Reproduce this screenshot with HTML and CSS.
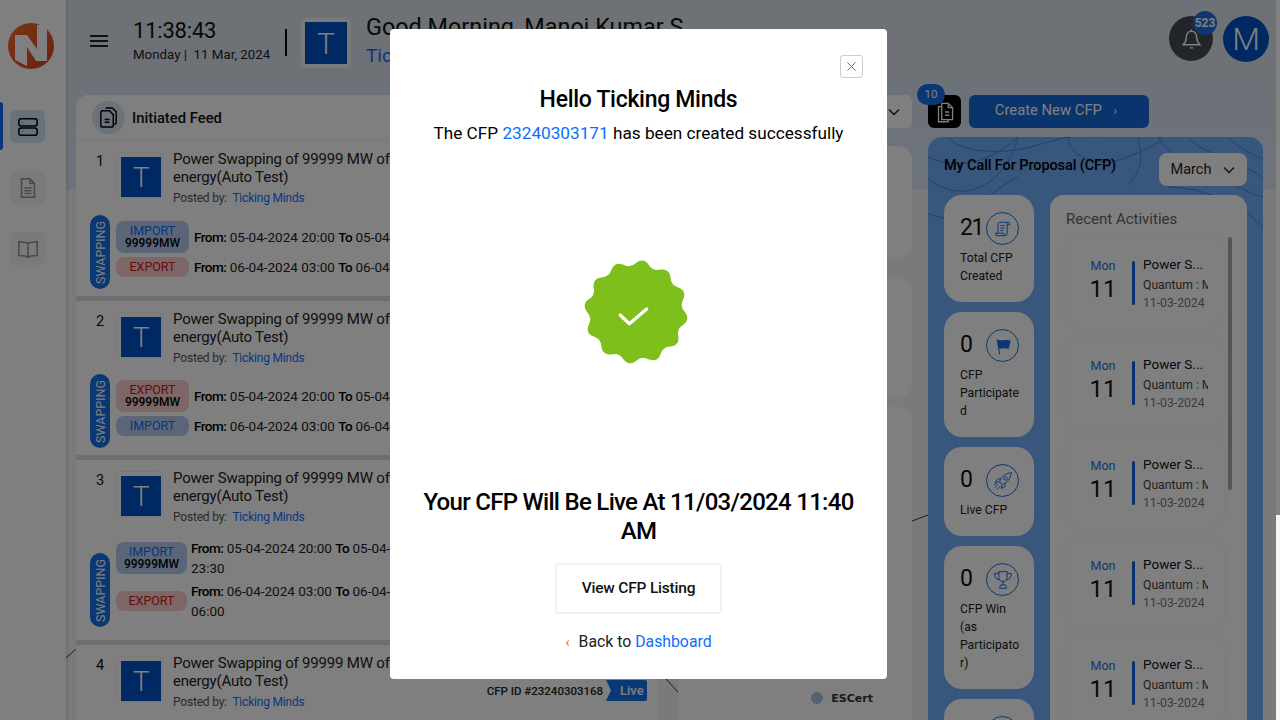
FILE: index.html
```html
<!DOCTYPE html>
<html lang="en">
<head>
  <meta charset="UTF-8">
  <meta name="viewport" content="width=device-width, initial-scale=1.0">
  <title>CFP Dashboard</title>
  <link rel="stylesheet" href="styles.css">
</head>
<body>
  <div class="app">
    <!-- Sidebar -->
    <aside class="sidebar">
      <svg class="logo" viewBox="0 0 46 46">
        <defs>
          <linearGradient id="logo-fill" x1="0" y1="0" x2="1" y2="1">
            <stop offset="0" stop-color="#f4702a"/>
            <stop offset="1" stop-color="#d8401c"/>
          </linearGradient>
        </defs>
        <circle cx="23" cy="23" r="23" fill="url(#logo-fill)"/>
        <path d="M7 37V12h12l10 14V2h10v36H28L19 24v19z" fill="#fff"/>
      </svg>
      <nav class="side-nav">
        <span class="side-marker"></span>
        <a class="side-item active">
          <svg viewBox="0 0 24 24" class="side-icon dark"><rect x="2" y="3" width="20" height="8" rx="2.5"/><rect x="2" y="13" width="20" height="8" rx="2.5"/><path d="M6 7h.5M6 17h.5"/></svg>
        </a>
        <a class="side-item">
          <svg viewBox="0 0 24 24" class="side-icon"><path d="M5 2h9l5 5v15H5z"/><path d="M14 2v5h5M8 12h8M8 15h8M8 18h8"/></svg>
        </a>
        <a class="side-item">
          <svg viewBox="0 0 24 24" class="side-icon"><path d="M12 6C9 4 6 4 2 4v15c4 0 7 0 10 2 3-2 6-2 10-2V4c-4 0-7 0-10 2zM12 6v15"/></svg>
        </a>
      </nav>
    </aside>

    <main class="main">
      <svg class="bg-lines" viewBox="0 0 1210 720">
        <path d="M0 658L10 649M600 679L612 692M846 521L862 515"/>
      </svg>

      <!-- Header -->
      <header class="topbar">
        <button class="menu-btn"><span></span><span></span><span></span></button>
        <div class="clock">
          <div class="clock-time">11:38:43</div>
          <div class="clock-date">Monday | &nbsp;11 Mar, 2024</div>
        </div>
        <div class="top-divider"></div>
        <div class="org-logo"><span>T</span></div>
        <div class="greeting">
          <div class="greeting-title">Good Morning, Manoj Kumar S</div>
          <div class="greeting-org">Ticking Minds</div>
        </div>
        <div class="top-right">
          <div class="bell">
            <svg viewBox="0 0 24 24"><path d="M4 18c2-2 3-3.500 3-7 0-3.500 2-6 5-6s5 2.500 5 6c0 3.500 1 5 3 7z"/><path d="M10.500 21h3M12 3v2"/></svg>
            <span class="bell-count">523</span>
          </div>
          <div class="avatar">M</div>
        </div>
      </header>

      <div class="columns">
        <!-- Feed -->
        <section class="feed">
          <div class="feed-head">
            <span class="feed-icon">
              <svg viewBox="0 0 24 24"><path d="M9 2h7l4 4v11a2 2 0 0 1-2 2"/><path d="M4 7a2 2 0 0 1 2-2h7l4 4v11a2 2 0 0 1-2 2H6a2 2 0 0 1-2-2z"/><path d="M8 14h5M8 17h5"/></svg>
            </span>
            <h2>Initiated Feed</h2>
          </div>

          <article class="feed-row row-a">
            <div class="row-head">
              <span class="row-num">1</span>
              <div class="row-logo"><span>T</span></div>
              <div>
                <div class="row-title">Power Swapping of 99999 MW of<br>energy(Auto Test)</div>
                <div class="row-posted">Posted by: &nbsp;<a>Ticking Minds</a></div>
              </div>
            </div>
            <div class="swap">
              <div class="swap-pill"><span>SWAPPING</span></div>
              <div class="swap-lines">
                <div class="swap-line">
                  <div class="chip import">IMPORT<b>99999MW</b></div>
                  <div class="time"><b>From:</b> 05-04-2024 20:00 <b>To</b> 05-04-2024 23:30</div>
                </div>
                <div class="swap-line">
                  <div class="chip export">EXPORT</div>
                  <div class="time"><b>From:</b> 06-04-2024 03:00 <b>To</b> 06-04-2024 06:00</div>
                </div>
              </div>
            </div>
          </article>

          <article class="feed-row row-b">
            <div class="row-head">
              <span class="row-num">2</span>
              <div class="row-logo"><span>T</span></div>
              <div>
                <div class="row-title">Power Swapping of 99999 MW of<br>energy(Auto Test)</div>
                <div class="row-posted">Posted by: &nbsp;<a>Ticking Minds</a></div>
              </div>
            </div>
            <div class="swap">
              <div class="swap-pill"><span>SWAPPING</span></div>
              <div class="swap-lines">
                <div class="swap-line">
                  <div class="chip export">EXPORT<b>99999MW</b></div>
                  <div class="time"><b>From:</b> 05-04-2024 20:00 <b>To</b> 05-04-2024 23:30</div>
                </div>
                <div class="swap-line">
                  <div class="chip import">IMPORT</div>
                  <div class="time"><b>From:</b> 06-04-2024 03:00 <b>To</b> 06-04-2024 06:00</div>
                </div>
              </div>
            </div>
          </article>

          <article class="feed-row row-c">
            <div class="row-head">
              <span class="row-num">3</span>
              <div class="row-logo"><span>T</span></div>
              <div>
                <div class="row-title">Power Swapping of 99999 MW of<br>energy(Auto Test)</div>
                <div class="row-posted">Posted by: &nbsp;<a>Ticking Minds</a></div>
              </div>
            </div>
            <div class="swap swap-wrap">
              <div class="swap-pill"><span>SWAPPING</span></div>
              <div class="swap-lines">
                <div class="swap-line">
                  <div class="chip import">IMPORT<b>99999MW</b></div>
                  <div class="time"><b>From:</b> 05-04-2024 20:00 <b>To</b> 05-04-2024<br>23:30</div>
                </div>
                <div class="swap-line">
                  <div class="chip export">EXPORT</div>
                  <div class="time"><b>From:</b> 06-04-2024 03:00 <b>To</b> 06-04-2024<br>06:00</div>
                </div>
              </div>
            </div>
          </article>

          <article class="feed-row row-d">
            <div class="row-head">
              <span class="row-num">4</span>
              <div class="row-logo"><span>T</span></div>
              <div>
                <div class="row-title">Power Swapping of 99999 MW of<br>energy(Auto Test)</div>
                <div class="row-posted">Posted by: &nbsp;<a>Ticking Minds</a></div>
              </div>
            </div>
            <div class="cfp-id">CFP ID #23240303168 <span class="live">Live</span></div>
          </article>
        </section>

        <!-- Middle column -->
        <section class="middle">
          <div class="mid-select">March
            <svg class="chev" viewBox="0 0 12 8"><path d="M1 1.500l5 5 5-5"/></svg>
          </div>
          <div class="mid-card mid-one"></div>
          <div class="mid-card mid-two"></div>
          <div class="mid-card mid-three">
            <span class="legend-dot"></span><span class="legend-text">ESCert</span>
          </div>
        </section>

        <!-- My CFP -->
        <section class="cfp">
          <div class="cfp-actions">
            <div class="doc-btn">
              <svg viewBox="0 0 24 24"><path d="M9 4h6l4 4v11H9z"/><path d="M15 4v4h4M12 12h4M12 15h4M9 7H6v14h9v-2"/></svg>
              <span class="doc-count">10</span>
            </div>
            <a class="create-btn">Create New CFP <span>›</span></a>
          </div>

          <div class="panel">
            <svg class="panel-lines" viewBox="0 0 335 600" preserveAspectRatio="none">
              <path d="M20 0c10 14 50 20 90 8s40-8 60-8M140 0c0 20 30 32 60 20s40-20 30-20M0 20c30 14 60 6 90-20M0 42c40 30 80 0 90-42M200 48c20-20 10-40 10-48M230 0c10 20 40 30 60 40s40 20 45 20M260 0c10 14 40 20 75 40M300 0c6 8 20 16 35 22M-10 70c40 30 60-10 100-30M240 50c30 0 70 14 95 40"/>
            </svg>
            <div class="panel-head">
              <h3>My Call For Proposal (CFP)</h3>
              <div class="panel-select">March
                <svg class="chev" viewBox="0 0 12 8"><path d="M1 1.500l5 5 5-5"/></svg>
              </div>
            </div>
            <div class="panel-body">
              <div class="stats">
                <div class="stat">
                  <div class="stat-top"><span class="stat-num">21</span>
                    <span class="stat-icon"><svg viewBox="0 0 24 24"><path d="M8 4h10a2 2 0 0 1 2 2v1h-3M8 4a2 2 0 0 0-2 2v11M17 5v12a3 3 0 0 1-3 3H5a2 2 0 0 1-2-2v-1h10v1a2 2 0 0 0 2 2M9 8h5M9 11h5M9 14h3"/></svg></span>
                  </div>
                  <div class="stat-label">Total CFP Created</div>
                </div>
                <div class="stat">
                  <div class="stat-top"><span class="stat-num">0</span>
                    <span class="stat-icon"><svg viewBox="0 0 24 24"><path d="M8 22L5 4"/><path class="solid" d="M5.500 5c5 2 9-1 15 1l-2 9c-5-2-7 0-11.500-.5z"/></svg></span>
                  </div>
                  <div class="stat-label">CFP Participated</div>
                </div>
                <div class="stat">
                  <div class="stat-top"><span class="stat-num">0</span>
                    <span class="stat-icon"><svg viewBox="0 0 24 24"><path d="M8 13c1-5 6-10 14-11-1 8-6 13-11 14z"/><circle cx="15" cy="9" r="2"/><path d="M9 9l-4 1-2 4 5-1M15 15l-1 4-4 2 1-5M6 16l-4 4M9 18l-4 4M4 14l-3 3"/></svg></span>
                  </div>
                  <div class="stat-label">Live CFP</div>
                </div>
                <div class="stat">
                  <div class="stat-top"><span class="stat-num">0</span>
                    <span class="stat-icon"><svg viewBox="0 0 24 24"><path d="M7 2h10v7a5 5 0 0 1-10 0zM7 4H2c0 5 2 7 5.500 8M17 4h5c0 5-2 7-5.500 8M12 14v4M9 18h6l1 4H8z"/></svg></span>
                  </div>
                  <div class="stat-label">CFP Win (as Participator)</div>
                </div>
                <div class="stat">
                  <div class="stat-top"><span class="stat-num">0</span>
                    <span class="stat-icon"></span>
                  </div>
                </div>
              </div>

              <div class="recent">
                <h4>Recent Activities</h4>
                <span class="recent-thumb"></span>
                <div class="activity">
                  <div class="activity-date"><span>Mon</span><b>11</b></div>
                  <span class="activity-bar"></span>
                  <div class="activity-text"><div class="activity-title">Power S...</div><div class="activity-line">Quantum : MW</div><div class="activity-line muted">11-03-2024 11:38</div></div>
                </div>
                <div class="activity">
                  <div class="activity-date"><span>Mon</span><b>11</b></div>
                  <span class="activity-bar"></span>
                  <div class="activity-text"><div class="activity-title">Power S...</div><div class="activity-line">Quantum : MW</div><div class="activity-line muted">11-03-2024 11:38</div></div>
                </div>
                <div class="activity">
                  <div class="activity-date"><span>Mon</span><b>11</b></div>
                  <span class="activity-bar"></span>
                  <div class="activity-text"><div class="activity-title">Power S...</div><div class="activity-line">Quantum : MW</div><div class="activity-line muted">11-03-2024 11:38</div></div>
                </div>
                <div class="activity">
                  <div class="activity-date"><span>Mon</span><b>11</b></div>
                  <span class="activity-bar"></span>
                  <div class="activity-text"><div class="activity-title">Power S...</div><div class="activity-line">Quantum : MW</div><div class="activity-line muted">11-03-2024 11:38</div></div>
                </div>
                <div class="activity">
                  <div class="activity-date"><span>Mon</span><b>11</b></div>
                  <span class="activity-bar"></span>
                  <div class="activity-text"><div class="activity-title">Power S...</div><div class="activity-line">Quantum : MW</div><div class="activity-line muted">11-03-2024 11:38</div></div>
                </div>
              </div>
            </div>
          </div>
        </section>
      </div>
    </main>
  </div>

  <!-- Success modal -->
  <div class="backdrop">
    <div class="modal">
      <button class="modal-close">
        <svg viewBox="0 0 12 12"><path d="M1.500 1.500l9 9M10.500 1.500l-9 9"/></svg>
      </button>
      <h1 class="modal-title">Hello Ticking Minds</h1>
      <p class="modal-sub">The CFP <a>23240303171</a> has been created successfully</p>
      <svg class="seal" viewBox="-51 -51 102 102">
        <path fill="#7fbf1b" d="M48 0Q53.500 7 46.400 12.400Q39.700 16.500 41.600 24Q42.800 32.900 33.900 33.900Q26.200 34.100 24 41.600Q20.700 49.900 12.400 46.400Q5.600 42.600 0 48Q-7 53.500 -12.400 46.400Q-16.500 39.700 -24 41.600Q-32.900 42.800 -33.900 33.900Q-34.100 26.200 -41.600 24Q-49.900 20.700 -46.400 12.400Q-42.600 5.600 -48 0Q-53.500 -7 -46.400 -12.400Q-39.700 -16.500 -41.600 -24Q-42.800 -32.900 -33.900 -33.900Q-26.200 -34.100 -24 -41.600Q-20.700 -49.900 -12.400 -46.400Q-5.600 -42.600 0 -48Q7 -53.500 12.400 -46.400Q16.500 -39.700 24 -41.600Q32.900 -42.800 33.900 -33.900Q34.100 -26.200 41.600 -24Q49.900 -20.700 46.400 -12.400Q42.600 -5.600 48 0Z"/>
        <path d="M-15.500 3l9 8.500L10.500-3" fill="none" stroke="#fff" stroke-width="3.200" stroke-linecap="round" stroke-linejoin="round"/>
      </svg>
      <h2 class="modal-live">Your CFP Will Be Live At 11/03/2024 11:40 AM</h2>
      <a class="modal-btn">View CFP Listing</a>
      <p class="modal-back"><span class="back-chev">‹</span>Back to <a>Dashboard</a></p>
    </div>
  </div>

  <div class="page-scroll"></div>
</body>
</html>
```

FILE: styles.css
```css
* {
  box-sizing: border-box;
}

body {
  margin: 0;
  font-family: Roboto, "Noto Sans", sans-serif;
  color: #111;
  background: #f4f4f4;
  overflow: hidden;
}

h1, h2, h3, h4, p {
  margin: 0;
  font-weight: 500;
}

.app {
  display: flex;
  width: 1276px;
  height: 720px;
  overflow: hidden;
}

/* Sidebar */
.sidebar {
  flex: 0 0 66px;
  background: #fff;
  box-shadow: 1px 0 3px rgba(0, 0, 0, 0.15);
  position: relative;
  z-index: 1;
}

.logo {
  display: block;
  width: 46px;
  height: 46px;
  margin: 23px 0 0 8px;
}

.side-nav {
  position: relative;
  margin-top: 33px;
  padding: 8px 0 0 10px;
}

.side-marker {
  position: absolute;
  left: 0;
  top: 0;
  width: 3px;
  height: 48px;
  background: #0d6efd;
  border-radius: 0 3px 3px 0;
}

.side-item {
  display: flex;
  align-items: center;
  justify-content: center;
  width: 35px;
  height: 33px;
  margin-bottom: 28px;
  background: #f5f5f5;
  border-radius: 6px;
}

.side-item.active {
  background: #d3e2f5;
}

.side-icon {
  width: 22px;
  height: 22px;
  fill: none;
  stroke: #8d93a0;
  stroke-width: 1.700;
}

.side-icon.dark {
  stroke: #000;
}

/* Main area */
.main {
  position: relative;
  flex: 1;
  padding-left: 10px;
  background: linear-gradient(#dde2ea, #dae7f7 190px, #f4f4f4 190px);
}

.bg-lines {
  position: absolute;
  left: 0;
  top: 0;
  width: 1210px;
  height: 720px;
  fill: none;
  stroke: #333;
  stroke-width: 1;
}

.topbar {
  position: relative;
  display: flex;
  height: 95px;
  margin-left: -10px;
}

.menu-btn {
  display: flex;
  flex-direction: column;
  gap: 3px;
  width: 18px;
  height: 12px;
  margin: 35px 0 0 24px;
  padding: 0;
  border: 0;
  background: none;
}

.menu-btn span {
  display: block;
  height: 2px;
  width: 18px;
  background: #222;
}

.clock {
  margin: 17px 0 0 25px;
  width: 152px;
}

.clock-time {
  font-size: 22px;
  letter-spacing: -0.2px;
  line-height: 28px;
}

.clock-date {
  font-size: 13.300px;
  line-height: 18px;
  margin-top: 1px;
  color: #222;
}

.top-divider {
  width: 2px;
  height: 27px;
  margin-top: 29px;
  background: #000;
}

.org-logo {
  width: 50px;
  height: 50px;
  margin: 18px 0 0 14px;
  padding: 4px;
  background: #f5f5f5;
  border-radius: 6px;
}

.org-logo span, .row-logo span {
  display: flex;
  align-items: center;
  justify-content: center;
  width: 100%;
  height: 100%;
  color: #fff;
  font-weight: 300;
  background: #0050c4;
}

.org-logo span {
  font-size: 30px;
}

.greeting {
  margin: 13px 0 0 15px;
}

.greeting-title {
  font-size: 23.400px;
  line-height: 28px;
}

.greeting-org {
  font-size: 19px;
  line-height: 24px;
  margin-top: 3px;
  color: #0d6efd;
}

.top-right {
  display: flex;
  gap: 10px;
  margin: 16px 7px 0 auto;
}

.bell {
  position: relative;
  display: flex;
  align-items: center;
  justify-content: center;
  width: 44px;
  height: 45px;
  background: #454d57;
  border-radius: 50%;
}

.bell svg {
  width: 25px;
  height: 25px;
  fill: none;
  stroke: #fff;
  stroke-width: 1.300;
}

.bell-count {
  position: absolute;
  top: -5px;
  right: -4px;
  width: 24px;
  height: 24px;
  font-size: 12px;
  font-weight: 700;
  line-height: 24px;
  text-align: center;
  color: #fff;
  background: #1a6fe0;
  border-radius: 50%;
}

.avatar {
  width: 46px;
  height: 46px;
  font-size: 32px;
  font-weight: 300;
  line-height: 46px;
  text-align: center;
  color: #fff;
  background: #0050c4;
  border-radius: 50%;
}

.columns {
  position: relative;
  display: flex;
  align-items: flex-start;
}

/* Feed column */
.feed {
  width: 582px;
  background: #fff;
  border-radius: 12px 12px 0 0;
}

.feed-head {
  display: flex;
  align-items: center;
  gap: 7px;
  height: 46px;
  padding-left: 16px;
  border-bottom: 1px solid #eee;
}

.feed-head h2 {
  font-size: 14.800px;
}

.feed-icon {
  display: flex;
  align-items: center;
  justify-content: center;
  width: 33px;
  height: 33px;
  background: #d8e4f2;
  border-radius: 50%;
}

.feed-icon svg {
  width: 23px;
  height: 23px;
  fill: none;
  stroke: #000;
  stroke-width: 1.500;
}

.feed-row {
  position: relative;
  padding: 11px 0 0 14px;
  border-bottom: 5px solid #ddd;
}

.row-a {
  height: 160px;
}

.row-b {
  height: 159px;
}

.row-c {
  height: 185px;
}

.row-d {
  height: 120px;
  border-bottom: 0;
}

.row-head {
  display: flex;
  align-items: flex-start;
}

.row-num {
  width: 26px;
  padding: 0 0 0 6px;
  font-size: 14.500px;
  line-height: 18px;
  margin-top: 1px;
}

.row-logo {
  flex: none;
  width: 47px;
  height: 46px;
  margin-right: 10px;
  padding: 4px 0 0 4px;
  border: 1px solid #f0f0f0;
  border-radius: 5px;
}

.row-logo span {
  width: 40px;
  height: 40px;
  font-size: 28px;
}

.row-title {
  margin-top: -2px;
  font-size: 15px;
  letter-spacing: -0.2px;
  line-height: 18px;
  color: #222;
}

.row-posted {
  margin-top: 4px;
  font-size: 12px;
  letter-spacing: -0.2px;
  line-height: 16px;
  color: #555;
}

.row-posted a {
  color: #0d6efd;
}

.swap {
  display: flex;
  gap: 6px;
  margin-top: 9px;
}

.row-b .swap {
  margin-top: 8px;
}

.swap-pill {
  flex: none;
  display: flex;
  align-items: center;
  justify-content: center;
  width: 20px;
  height: 74px;
  background: #1570e8;
  border-radius: 10px;
}

.swap-pill span {
  transform: rotate(-90deg);
  font-size: 12.500px;
  color: #fff;
  white-space: nowrap;
}

.swap-lines {
  display: flex;
  flex-direction: column;
  gap: 4px;
  margin-top: 6px;
}

.swap-line {
  display: flex;
  align-items: center;
  gap: 5px;
}

.chip {
  flex: none;
  width: 73px;
  padding: 4px 0;
  font-size: 12.500px;
  line-height: 12px;
  text-align: center;
  border-radius: 8px;
}

.chip b {
  display: block;
  font-size: 12px;
  font-weight: 500;
  color: #000;
}

.chip.import {
  color: #0d6efd;
  background: #b4cdf0;
}

.chip.export {
  color: #d4161c;
  background: #f8cccc;
}

.time {
  font-size: 13.500px;
  line-height: 20px;
  white-space: nowrap;
  color: #222;
}

.time b {
  font-weight: 500;
  letter-spacing: -0.5px;
  color: #000;
}

.swap-wrap {
  margin-top: 13px;
}

.swap-wrap .swap-pill {
  margin-top: 15px;
}

.swap-wrap .swap-lines {
  margin-top: 0;
  gap: 3px;
}

.swap-wrap .chip {
  width: 71px;
}

.swap-wrap .swap-line {
  gap: 4px;
}

.cfp-id {
  position: absolute;
  top: 35px;
  right: 11px;
  font-size: 11.500px;
  font-weight: 500;
  line-height: 21px;
  color: #222;
}

.live {
  display: inline-block;
  width: 41px;
  height: 21px;
  padding-left: 14px;
  color: #fff;
  font-size: 13px;
  background: #1570e8;
  border-radius: 0 2px 2px 0;
  clip-path: polygon(0 0, 100% 0, 100% 100%, 0 100%, 5px 50%);
}

/* Middle column */
.middle {
  width: 234px;
  margin-left: 20px;
}

.mid-select {
  display: flex;
  align-items: center;
  justify-content: flex-end;
  gap: 10px;
  height: 33px;
  padding-right: 12px;
  font-size: 14px;
  color: #222;
  background: #fff;
  border-radius: 6px;
}

.chev {
  width: 12px;
  height: 8px;
  fill: none;
  stroke: #222;
  stroke-width: 1.400;
}

.mid-card {
  background: #fff;
  border-radius: 14px;
}

.mid-one {
  height: 113px;
  margin-top: 18px;
}

.mid-two {
  height: 120px;
  margin-top: 18px;
}

.mid-three {
  display: flex;
  align-items: center;
  justify-content: flex-end;
  gap: 8px;
  height: 400px;
  margin-top: 10px;
  padding: 284px 39px 102px 0;
}

.legend-dot {
  width: 12px;
  height: 12px;
  background: #a9c4e8;
  border-radius: 50%;
}

.legend-text {
  font-family: "DejaVu Sans", sans-serif;
  font-size: 11px;
  font-weight: 600;
  color: #333;
}

/* My CFP column */
.cfp {
  width: 335px;
  margin-left: 16px;
}

.cfp-actions {
  display: flex;
  gap: 8px;
}

.doc-btn {
  position: relative;
  display: flex;
  align-items: center;
  justify-content: center;
  width: 33px;
  height: 33px;
  background: #000;
  border-radius: 6px;
}

.doc-btn svg {
  width: 26px;
  height: 26px;
  fill: none;
  stroke: #fff;
  stroke-width: 1.200;
}

.doc-count {
  position: absolute;
  top: -11px;
  left: -11px;
  width: 28px;
  height: 21px;
  font-size: 11.500px;
  line-height: 21px;
  text-align: center;
  color: #fff;
  background: #1570e8;
  border-radius: 11px;
}

.create-btn {
  width: 180px;
  height: 33px;
  padding-right: 6px;
  font-size: 14.800px;
  line-height: 30px;
  text-align: center;
  color: #fff;
  background: #1468d8;
  border-radius: 6px;
}

.create-btn span {
  margin-left: 8px;
  font-size: 12px;
}

.panel {
  position: relative;
  height: 640px;
  margin-top: 9px;
  padding: 16px 16px 0;
  background: #72adfa;
  border-radius: 14px 14px 0 0;
  overflow: hidden;
}

.panel-lines {
  position: absolute;
  left: 0;
  top: 0;
  width: 335px;
  height: 600px;
  fill: none;
  stroke: #3f86e6;
  stroke-width: 1;
}

.panel-head {
  position: relative;
  display: flex;
  justify-content: space-between;
}

.panel-head h3 {
  font-size: 14.500px;
  letter-spacing: -0.1px;
  line-height: 26px;
  color: #000;
}

.panel-select {
  display: flex;
  align-items: center;
  justify-content: center;
  gap: 12px;
  width: 88px;
  height: 33px;
  font-size: 14.500px;
  color: #222;
  background: #fff;
  border-radius: 8px;
}

.panel-body {
  position: relative;
  display: flex;
  gap: 16px;
  margin-top: 9px;
}

.stats {
  flex: 0 0 90px;
}

.stat {
  padding: 17px 13px 17px 16px;
  margin-bottom: 10px;
  background: #fff;
  border-radius: 18px;
}

.stat-top {
  display: flex;
  align-items: center;
}

.stat-num {
  flex: 0 0 26px;
  padding-bottom: 2px;
  font-size: 23px;
  letter-spacing: -1.500px;
}

.stat-icon {
  flex: none;
  width: 33px;
  height: 33px;
  padding: 6px;
  border: 1px solid #1470e8;
  border-radius: 50%;
}

.stat-icon svg {
  display: block;
  width: 20px;
  height: 20px;
  fill: none;
  stroke: #1470e8;
  stroke-width: 1.200;
}

.stat-icon .solid {
  fill: #1470e8;
}

.stat-label {
  margin-top: 4px;
  font-size: 12.200px;
  line-height: 18px;
  overflow-wrap: anywhere;
  color: #222;
}

.recent {
  position: relative;
  flex: 0 0 197px;
  height: 600px;
  padding: 14px 0 0 16px;
  background: #fff;
  border-radius: 14px;
  overflow: hidden;
}

.recent h4 {
  height: 28px;
  font-size: 15px;
  font-weight: 400;
  line-height: 20px;
  color: #666;
}

.recent-thumb {
  position: absolute;
  left: 178px;
  top: 42px;
  width: 4px;
  height: 253px;
  background: #a8a8a8;
  border-radius: 2px;
}

.activity {
  display: flex;
  align-items: flex-start;
  width: 158px;
  height: 91px;
  margin-bottom: 9px;
  padding: 22px 0 0 12px;
  border-radius: 16px;
  box-shadow: 0 0 8px rgba(0, 0, 0, 0.05);
}

.activity-date {
  flex: 0 0 50px;
  margin-right: 4px;
  text-align: center;
}

.activity-date span {
  display: block;
  font-size: 12.500px;
  line-height: 14px;
  color: #1470e8;
}

.activity-date b {
  display: block;
  margin-top: 3px;
  font-size: 24px;
  font-weight: 400;
  line-height: 26px;
}

.activity-bar {
  flex: none;
  width: 3px;
  height: 44px;
  margin-top: 2px;
  background: #0d62d8;
  border-radius: 2px;
}

.activity-text {
  width: 65px;
  margin: -5px 0 0 8px;
  overflow: hidden;
}

.activity-title {
  margin-bottom: 2px;
  font-size: 13.500px;
  line-height: 20px;
}

.activity-line {
  font-size: 12.200px;
  line-height: 18px;
  white-space: nowrap;
  color: #444;
}

.activity-line.muted {
  color: #777;
}

/* Success modal */
.backdrop {
  position: fixed;
  left: 0;
  top: 0;
  right: 0;
  bottom: 0;
  z-index: 10;
  display: flex;
  justify-content: center;
  padding-right: 3px;
  background: rgba(0, 0, 0, 0.5);
}

.modal {
  position: relative;
  display: flex;
  flex-direction: column;
  align-items: center;
  width: 497px;
  height: 650px;
  margin-top: 29px;
  padding: 57px 20px 0;
  background: #fff;
  border-radius: 4px;
}

.modal-close {
  position: absolute;
  top: 26px;
  right: 24px;
  width: 23px;
  height: 23px;
  padding: 5px;
  background: #fff;
  border: 1px solid #ccc;
  border-radius: 3px;
}

.modal-close svg {
  display: block;
  width: 11px;
  height: 11px;
  fill: none;
  stroke: #666;
  stroke-width: 1;
}

.modal-title {
  font-size: 23px;
  letter-spacing: -0.3px;
  line-height: 28px;
  color: #000;
}

.modal-sub {
  margin-top: 7px;
  font-size: 17.200px;
  font-weight: 400;
  line-height: 24px;
  color: #000;
}

.modal-sub a, .modal-back a {
  color: #0d6efd;
}

.seal {
  width: 104px;
  height: 104px;
  margin: 115px 5px 0 0;
}

.modal-live {
  margin-top: 124px;
  font-size: 24px;
  letter-spacing: -0.7px;
  line-height: 29px;
  text-align: center;
  color: #000;
}

.modal-btn {
  width: 167px;
  height: 51px;
  margin-top: 17px;
  font-size: 15.500px;
  font-weight: 500;
  letter-spacing: -0.2px;
  line-height: 47px;
  text-align: center;
  border: 2px solid #f2f2f2;
  border-radius: 3px;
}

.modal-back {
  margin-top: 16px;
  font-size: 15.800px;
  font-weight: 400;
  line-height: 24px;
  color: #222;
}

.back-chev {
  margin-right: 9px;
  color: #f0652a;
  font-size: 14px;
}

.page-scroll {
  position: fixed;
  right: 0;
  top: 0;
  bottom: 0;
  z-index: 20;
  width: 4px;
  background: linear-gradient(#838383 515px, #f6f6f6 515px);
}
```
